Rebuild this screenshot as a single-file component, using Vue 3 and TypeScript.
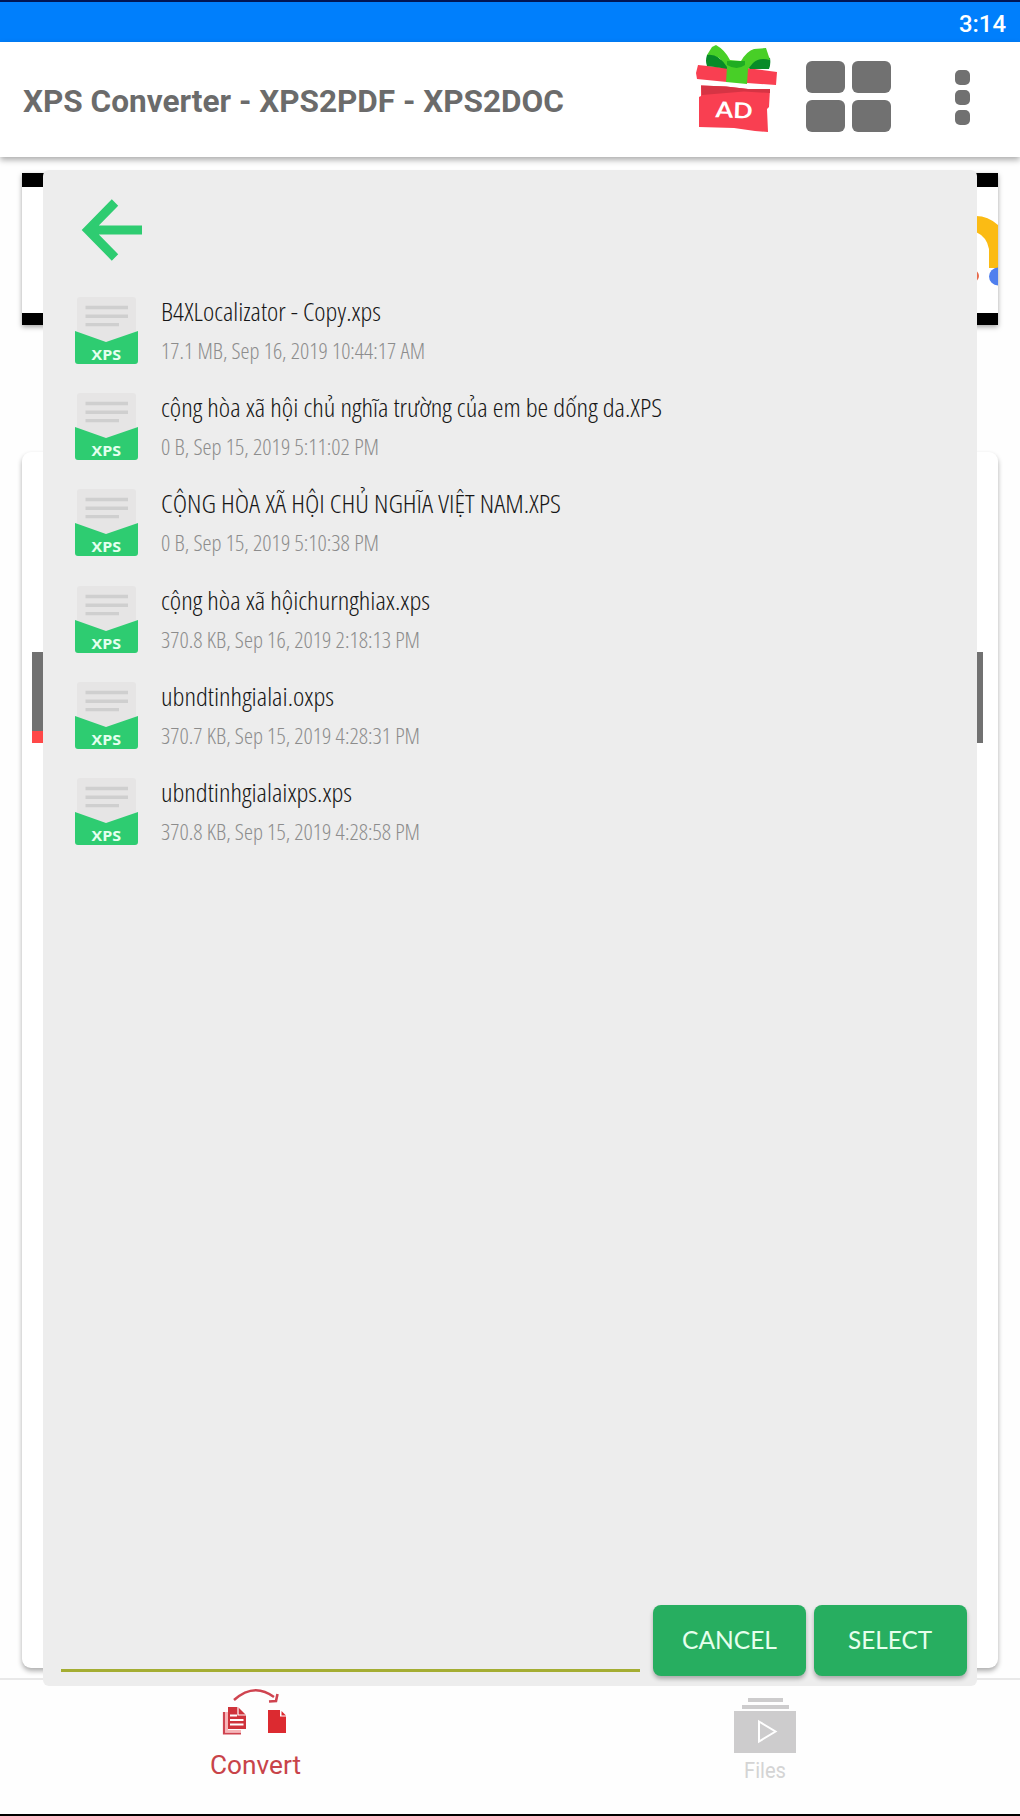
<script setup lang="ts">
interface FileEntry {
  name: string
  nameWidth: number
  meta: string
  metaWidth: number
}

const files: FileEntry[] = [
  { name: 'B4XLocalizator - Copy.xps', nameWidth: 220, meta: '17.1 MB, Sep 16, 2019 10:44:17 AM', metaWidth: 264 },
  { name: 'cộng hòa xã hội chủ nghĩa trường của em be dống da.XPS', nameWidth: 501, meta: '0 B, Sep 15, 2019 5:11:02 PM', metaWidth: 218 },
  { name: 'CỘNG HÒA XÃ HỘI CHỦ NGHĨA VIỆT NAM.XPS', nameWidth: 400, meta: '0 B, Sep 15, 2019 5:10:38 PM', metaWidth: 218 },
  { name: 'cộng hòa xã hộichurnghiax.xps', nameWidth: 269, meta: '370.8 KB, Sep 16, 2019 2:18:13 PM', metaWidth: 259 },
  { name: 'ubndtinhgialai.oxps', nameWidth: 173, meta: '370.7 KB, Sep 15, 2019 4:28:31 PM', metaWidth: 259 },
  { name: 'ubndtinhgialaixps.xps', nameWidth: 191, meta: '370.8 KB, Sep 15, 2019 4:28:58 PM', metaWidth: 259 },
]
</script>

<template>
  <div class="screen">
    <div class="status">
      <svg class="clock" width="52" height="30"><text x="2" y="22" textLength="47" lengthAdjust="spacingAndGlyphs">3:14</text></svg>
    </div>

    <header class="toolbar">
      <svg class="title" width="544" height="44"><text x="0" y="32" textLength="541" lengthAdjust="spacingAndGlyphs">XPS Converter - XPS2PDF - XPS2DOC</text></svg>
      <svg class="gift" width="84" height="90" viewBox="0 0 84 90">
        <path d="M7 42.500 L32 43.500 L54 46 L76 46 L75 64 L73 66 L74 89 L61 88 L40 85 L5 84 L5 54 L7 53Z" fill="#f93f51" />
        <path d="M7 42.500 L32 43.500 L54 46 L76 46 V50 L50 48.500 L8 52Z" fill="#d63444" />
        <path d="M4 22 L33 25 V39 L3 36 L2 30Z M53 25 L83 29 L82 42 L53 40Z" fill="#f93f51" />
        <path d="M13 12 Q19 8 26 16 L34 20 V26 Q22 24 13 23 Q11 18 13 12Z M76 15 Q66 12 59 19 L53 23 L56 26 L75 26 Q77 21 76 15Z" fill="#078b28" />
        <path d="M13 12 L18 4 L22 2 Q31 7 36 17 L47 18 Q53 8 60 6 L72 5 L76 17 Q65 14 59 20 L54 26 L53 41 L32 39 L33 24 Q24 10 13 12Z" fill="#48cf27" />
        <path d="M33 18 H51 V22 Q43 28 33 22Z" fill="#20ad22" />
        <text x="21.500" y="75" textLength="37" lengthAdjust="spacingAndGlyphs" transform="rotate(2 40 70)">AD</text>
      </svg>
      <div class="grid"><i v-for="n in 4" :key="n"></i></div>
      <div class="more"><i v-for="n in 3" :key="n"></i></div>
    </header>

    <main class="page">
      <div class="banner">
        <svg width="22" height="126" viewBox="0 0 22 126">
          <path d="M0 29 Q12 29 22 38 V81 H13 V62 Q11 50 0 45Z" fill="#fbbb14" />
          <circle cx="22" cy="89.500" r="9" fill="#4f7fee" />
          <circle cx="-3" cy="89" r="6" fill="#e76a4c" />
        </svg>
      </div>
      <section class="card">
        <span class="strip left"></span>
        <span class="strip right"></span>
      </section>
    </main>

    <nav class="tabs">
      <div class="tab active">
        <svg width="68" height="50" viewBox="0 0 68 50">
          <path d="M13 14 Q33 -4 53 11" fill="none" stroke="#cf4450" stroke-width="2.4" />
          <path d="M56.500 8 L55 15 L48 15.500" fill="none" stroke="#cf4450" stroke-width="2.6" />
          <path d="M3 26 V47.500 H20" fill="none" stroke="#cf4450" stroke-width="2.200" />
          <path d="M4 26 H7 V44 H20 V46.500 H4Z" fill="#f7b5b8" />
          <path d="M7 21 H17 L25 29 V43 H7Z" fill="#cf333b" />
          <path d="M17 21 V29 H25" fill="none" stroke="#fff" stroke-width="1.200" />
          <path d="M9 29.500 H16 M9 34 H22.500 M9 38.500 H22.500" stroke="#fff" stroke-width="1.800" />
          <path d="M47 24 H59 V30.500 H65 V47 H47Z" fill="#dc2a30" />
          <path d="M60.500 25 L65 29.500 H60.500Z" fill="#dc2a30" />
        </svg>
        <svg class="tab-label" width="96" height="34"><text x="3" y="24" textLength="91" lengthAdjust="spacingAndGlyphs">Convert</text></svg>
      </div>
      <div class="tab">
        <svg width="62" height="55" viewBox="0 0 62 55">
          <path d="M14 0 H49 V4 H14Z M8 7 H55 V11 H8Z M0 13 H62 V55 H0Z" fill="#cdcccd" />
          <path d="M25 23.500 L41.500 33.500 L25 43.500Z" fill="none" stroke="#fff" stroke-width="2" />
        </svg>
        <svg class="tab-label" width="52" height="34"><text x="5" y="23.500" textLength="42" lengthAdjust="spacingAndGlyphs">Files</text></svg>
      </div>
    </nav>

    <div class="dialog">
      <svg class="back" width="64" height="64" viewBox="0 0 64 64">
        <path d="M61 32 H9 M34 4.500 L7 32 L34 59.500" fill="none" stroke="#2ecc71" stroke-width="9" />
      </svg>

      <ul class="list">
        <li v-for="file in files" :key="file.name" class="row">
          <svg class="doc" width="64" height="70" viewBox="0 0 64 70">
            <path d="M5 0 H58 Q61 0 61 3 V50 H2 V3 Q2 0 5 0Z" fill="#e6e5e5" />
            <path d="M10.500 10.500 H53 M10.500 19.200 H53 M10.500 27.600 H44" stroke="#cfcfcf" stroke-width="3.400" />
            <path d="M0 34 L31 45 L63 34 V64 Q63 67 60 67 H3 Q0 67 0 64Z" fill="#2ecc71" />
            <text x="16.500" y="63" textLength="29.500" lengthAdjust="spacingAndGlyphs">XPS</text>
          </svg>
          <div class="info">
            <svg class="name" :width="file.nameWidth + 8" height="44"><text x="2" y="33" :textLength="file.nameWidth" lengthAdjust="spacingAndGlyphs">{{ file.name }}</text></svg>
            <svg class="meta" :width="file.metaWidth + 8" height="40"><text x="2" y="27" :textLength="file.metaWidth" lengthAdjust="spacingAndGlyphs">{{ file.meta }}</text></svg>
          </div>
        </li>
      </ul>

      <footer class="actions">
        <div class="field"></div>
        <button><svg width="100" height="34"><text x="2" y="27" textLength="95" lengthAdjust="spacingAndGlyphs">CANCEL</text></svg></button>
        <button><svg width="90" height="34"><text x="2" y="27" textLength="84" lengthAdjust="spacingAndGlyphs">SELECT</text></svg></button>
      </footer>
    </div>
  </div>
</template>

<style>
body {
  background: #fefefe;
}
</style>

<style scoped>
* {
  box-sizing: border-box;
}
svg {
  display: block;
  flex: none;
}
.screen {
  position: relative;
  display: flex;
  flex-direction: column;
  width: 1020px;
  height: 1816px;
  overflow: hidden;
  background: #fefefe;
  border-bottom: 2px solid #000;
  font-family: Roboto, sans-serif;
}
.status {
  height: 42px;
  flex: none;
  display: flex;
  justify-content: flex-end;
  padding: 8px 11px 0 0;
  background: #007ffc;
  border-top: 2px solid #001554;
}
.clock text {
  font-size: 23px;
  font-weight: 500;
  fill: #fff;
}
.toolbar {
  display: flex;
  align-items: flex-start;
  height: 115px;
  flex: none;
  padding-left: 23px;
  background: #fff;
  box-shadow: 0 3px 6px rgba(0, 0, 0, 0.32);
  z-index: 1;
}
.title {
  margin-top: 38px;
}
.title text {
  font-size: 31px;
  font-weight: 700;
  fill: #6b6b6b;
}
.gift {
  margin: 1px 0 0 127px;
}
.gift text {
  font-family: Lato, sans-serif;
  font-size: 22px;
  font-weight: 700;
  fill: #fff;
}
.grid {
  display: grid;
  grid-template-columns: 39px 39px;
  grid-auto-rows: 32px;
  gap: 7px;
  margin: 19px 0 0 28px;
}
.grid i {
  border-radius: 6px;
  background: #717171;
}
.more {
  display: flex;
  flex-direction: column;
  gap: 5px;
  margin: 28px 0 0 64px;
}
.more i {
  width: 15px;
  height: 15px;
  border-radius: 5px;
  background: #717171;
}
.page {
  flex: 1;
  display: flex;
  flex-direction: column;
  padding: 16px 22px 10px;
}
.banner {
  display: flex;
  justify-content: flex-end;
  height: 152px;
  flex: none;
  background: #fff;
  border-top: 14px solid #000;
  border-bottom: 12px solid #000;
  box-shadow: 0 2px 5px rgba(0, 0, 0, 0.35);
}
.card {
  display: flex;
  justify-content: space-between;
  flex: 1;
  margin-top: 127px;
  padding: 200px 15px 0 10px;
  border-radius: 9px;
  background: #fff;
  box-shadow: 0 3px 5px rgba(0, 0, 0, 0.32);
}
.strip {
  width: 16px;
  height: 91px;
  background: #717171;
}
.strip.left {
  border-bottom: 12px solid #ff4848;
}
.tabs {
  display: flex;
  height: 136px;
  flex: none;
  border-top: 2px solid #e9e9e9;
}
.tab {
  flex: 1;
  display: flex;
  flex-direction: column;
  align-items: center;
  padding-top: 18px;
}
.tab.active {
  padding-top: 6px;
}
.tab-label {
  margin-top: 1px;
}
.tab-label text {
  font-size: 21.500px;
  fill: #d4d4d4;
}
.active .tab-label {
  margin-top: 14px;
}
.active .tab-label text {
  font-size: 25.500px;
  fill: #c84349;
}
.dialog {
  position: absolute;
  z-index: 2;
  left: 43px;
  top: 170px;
  width: 934px;
  height: 1516px;
  display: flex;
  flex-direction: column;
  border-radius: 6px;
  background: #ededed;
}
.back {
  margin: 28px 0 0 38px;
}
.list {
  flex: 1;
  margin: 0;
  padding: 26px 0 0 32px;
  list-style: none;
}
.row {
  display: flex;
  height: 96.200px;
}
.doc {
  margin-top: 9px;
}
.doc text {
  font-family: 'Open Sans', sans-serif;
  font-size: 15px;
  font-weight: 700;
  fill: #e4ffef;
}
.info {
  margin-left: 20px;
}
.name text,
.meta text {
  font-family: 'Open Sans', 'Noto Sans', sans-serif;
  font-stretch: 75%;
}
.name text {
  font-size: 26px;
  font-weight: 350;
  fill: #161616;
}
.meta text {
  font-size: 22px;
  font-weight: 300;
  fill: #8c8c8c;
}
.actions {
  display: flex;
  height: 81px;
  flex: none;
  padding-right: 9px;
}
.field {
  width: 579px;
  height: 67px;
  margin: 0 13px 0 18px;
  border-bottom: 3px solid #a4ad32;
}
button {
  display: flex;
  align-items: center;
  justify-content: center;
  width: 153px;
  height: 71px;
  margin: 0 8px 0 0;
  padding: 0 0 4px;
  border: 0;
  border-radius: 8px;
  background: #27ae60;
  box-shadow: 0 3px 4px rgba(0, 0, 0, 0.28);
}
button:last-child {
  margin-right: 0;
}
button text {
  font-family: Lato, sans-serif;
  font-size: 25px;
  fill: #e6ffed;
}
</style>
